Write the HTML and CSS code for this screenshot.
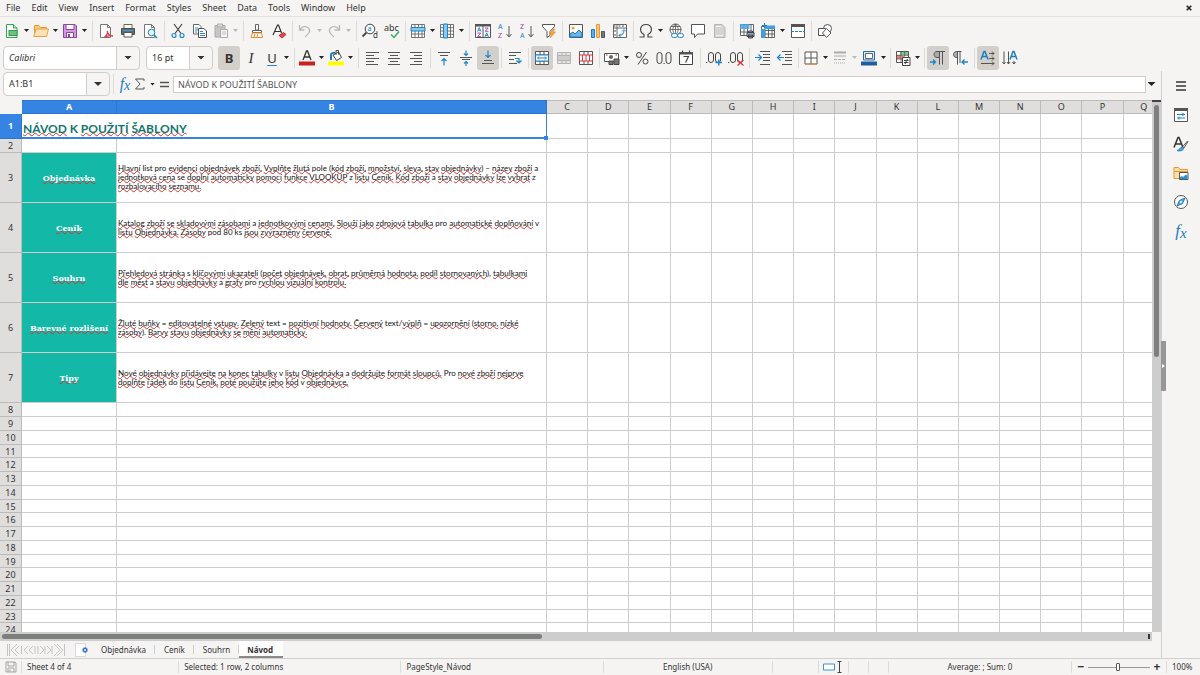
FILE: index.html
```
<!DOCTYPE html>
<html lang="en">
<head>
<meta charset="utf-8">
<title>Návod – Calc</title>
<link rel="stylesheet" href="styles.css">
</head>
<body>
<nav class="menubar">
  <button>File</button><button>Edit</button><button>View</button><button>Insert</button><button>Format</button><button>Styles</button><button>Sheet</button><button>Data</button><button>Tools</button><button>Window</button><button>Help</button>
  <button class="close" aria-label="Close document"><svg width="6" height="6" viewBox="0 0 6 6"><path d="M.7.7l4.6 4.6M5.3.7L.7 5.3" stroke="#222" stroke-width="1.6"/></svg></button>
</nav>

<div class="toolbar" role="toolbar" aria-label="Standard">
  <button class="tool split" aria-label="New"><svg viewBox="0 0 16 16"><path d="M2.500 1.500h7l3.500 3.500v9.500h-10.500z" fill="#fff" stroke="#32a852"/><path d="M9.500 1.500v3.500h3.500" fill="#bfe8c8" stroke="#32a852"/><path d="M4.500 7h9v6h-9z" fill="#2f9e48"/><path d="M5.500 9h7M5.500 11h7" stroke="#d5f3da" stroke-width=".8"/></svg></button>
  <button class="tool split" aria-label="Open"><svg viewBox="0 0 16 16"><path d="M1.500 13.500v-11h4.500l1.500 2h6v2" fill="#f9c980" stroke="#e59a38"/><path d="M.7 13.500l2.300-7.500h12.500l-2 7.500z" fill="#fde3b3" stroke="#e9a446"/></svg></button>
  <button class="tool split" aria-label="Save"><svg viewBox="0 0 16 16"><path d="M1.500 1.500h11.500l1.500 1.500v11.500h-13z" fill="#d997e0" stroke="#8d45a5"/><path d="M4 1.500h8v5h-8z" fill="#fff" stroke="#8d45a5"/><path d="M4.500 9.500h7v5h-7z" fill="#fff" stroke="#8d45a5"/><path d="M6 11h2v3h-2z" fill="#8d45a5"/></svg></button>
  <span class="sep"></span>
  <button class="tool" aria-label="Export as PDF"><svg viewBox="0 0 16 16"><path d="M2.500 1.500h7l3 3v10h-10z" fill="#fff" stroke="#777"/><path d="M9.500 1.500v3h3" fill="none" stroke="#777"/><path d="M6 14.500c2-1 4-4 3.500-6.500 0 3 2 5 5.500 5-3-.8-6 0-9 1.500" fill="none" stroke="#dc3d48" stroke-width="1.300"/></svg></button>
  <button class="tool" aria-label="Print"><svg viewBox="0 0 16 16"><path d="M4 5v-3.500h8v3.500" fill="#fff" stroke="#666"/><path d="M1.500 5.500h13v6h-13z" fill="#68696b" stroke="#4d4e50"/><path d="M4 9.500h8v4.500h-8z" fill="#fff" stroke="#555"/><path d="M3 7.500h10" stroke="#37a0dc"/></svg></button>
  <button class="tool" aria-label="Print preview"><svg viewBox="0 0 16 16"><path d="M2.500 1.500h7l3 3v10h-10z" fill="#fff" stroke="#777"/><path d="M9.500 1.500v3h3" fill="none" stroke="#777"/><circle cx="9.500" cy="9.500" r="3.300" fill="#e6f3fc" stroke="#1e84c8"/><path d="M12 12l3 3" stroke="#1e84c8" stroke-width="1.500"/></svg></button>
  <span class="sep"></span>
  <button class="tool" aria-label="Cut"><svg viewBox="0 0 16 16"><path d="M4 1l7 9.500M12 1l-7 9.500" stroke="#444" stroke-width="1.200"/><circle cx="4" cy="12.500" r="2" fill="none" stroke="#1e8bcd" stroke-width="1.200"/><circle cx="12" cy="12.500" r="2" fill="none" stroke="#1e8bcd" stroke-width="1.200"/></svg></button>
  <button class="tool" aria-label="Copy"><svg viewBox="0 0 16 16"><path d="M1.500 1.500h5.500l2 2v7.500h-7.500z" fill="#fff" stroke="#666"/><path d="M6.500 5.500h5.500l2.500 2.500v6.500h-8z" fill="#fff" stroke="#555"/><path d="M3 5h3M3 7h3M3 9h2M8 8.500h3M8 10.500h5M8 12.500h5" stroke="#2b8ccc"/></svg></button>
  <button class="tool split dim" aria-label="Paste"><svg viewBox="0 0 16 16"><path d="M2 2.500h10v11.500h-10z" fill="#c6c6c6" stroke="#aaa"/><path d="M4.500 1h5v3h-5z" fill="#ddd" stroke="#aaa"/><path d="M7.500 6.500h7v8h-7z" fill="#f6f6f6" stroke="#aaa"/><path d="M9 9h4M9 11h4" stroke="#bbb"/></svg></button>
  <span class="sep"></span>
  <button class="tool" aria-label="Clone formatting"><svg viewBox="0 0 16 16"><path d="M6.500 1.500h3v5.500h-3z" fill="#fff" stroke="#666"/><path d="M3.500 7.500h9v2h-9z" fill="#fff" stroke="#666"/><path d="M3.500 10l-1.500 4.500h11.500l-1-4.500z" fill="#fff" stroke="#ef8b2c"/><path d="M5 14l1-3M8 14l.5-3" stroke="#ef8b2c"/></svg></button>
  <button class="tool" aria-label="Clear formatting"><svg viewBox="0 0 16 16"><path d="M2 12l4.500-10h1l3 8M3.500 8.500h6" fill="none" stroke="#333" stroke-width="1.200"/><path d="M8 12.500l4.500-3 2.500 2-4 3.500z" fill="#e2484e" stroke="#c22e39"/></svg></button>
  <span class="sep tight"></span>
  <button class="tool split dim" aria-label="Undo"><svg viewBox="0 0 16 16"><path d="M2.500 2v5h5M3 6.500c2-3 6-4 8.500-1.500 3 3-.5 6-3.500 9" fill="none" stroke="#b9b9b9" stroke-width="1.300"/></svg></button>
  <button class="tool split dim" aria-label="Redo"><svg viewBox="0 0 16 16"><path d="M13.500 2v5h-5M13 6.500c-2-3-6-4-8.500-1.500-3 3 .5 6 3.500 9" fill="none" stroke="#b9b9b9" stroke-width="1.300"/></svg></button>
  <span class="sep"></span>
  <button class="tool" aria-label="Find and replace"><svg viewBox="0 0 16 16"><circle cx="8" cy="6" r="4.800" fill="#f4faff" stroke="#444"/><path d="M4.500 9.500l-4 4" stroke="#444" stroke-width="1.800"/><text x="5.500" y="8" font-size="7" fill="#1583c6">a</text><text x="11" y="15" font-size="8" fill="#333">d</text></svg></button>
  <button class="tool" aria-label="Spelling"><svg viewBox="0 0 16 16"><text x="0" y="8" font-size="9" fill="#333">abc</text><path d="M7 11.500l3 3 5-6" fill="none" stroke="#38ae60" stroke-width="1.500"/></svg></button>
  <span class="sep tight"></span>
  <button class="tool split" aria-label="Row"><svg viewBox="0 0 16 16"><path d="M1.500 1.500h13v13h-13zM1.500 11h13M5 1.500v13M8.500 1.500v13M12 1.500v13" fill="#fff" stroke="#666" stroke-width=".9"/><path d="M1 4.500h14v3.500h-14z" fill="#8cc8f0" stroke="#1e82c4"/></svg></button>
  <button class="tool split" aria-label="Column"><svg viewBox="0 0 16 16"><path d="M1.500 1.500h13v13h-13zM1.500 4.700h13M1.500 8h13M1.500 11.300h13M11.500 1.500v13" fill="#fff" stroke="#666" stroke-width=".9"/><path d="M4.500 1h4v14h-4z" fill="#8cc8f0" stroke="#1e82c4"/></svg></button>
  <span class="sep"></span>
  <button class="tool" aria-label="Sort"><svg viewBox="0 0 16 16"><path d="M.5 1.500h15v13h-15zM8 3v11.500" fill="#fff" stroke="#555"/><path d="M0 1h16v2.500h-16z" fill="#555"/><path d="M2.500 8.500l1.700-4 1.700 4M3 7.200h2.500M10 13.800l1.700-4 1.700 4M10.500 12.500h2.500" fill="none" stroke="#1683ca" stroke-width=".9"/><path d="M2.500 10h3.200l-3 3.600h3.300M10 5h3.200l-3 3.300h3.300" fill="none" stroke="#a03db0" stroke-width=".9"/></svg></button>
  <button class="tool" aria-label="Sort ascending"><svg viewBox="0 0 16 16"><text x="1" y="6" font-size="7" fill="#1683ca">A</text><text x="1" y="15" font-size="7" fill="#a03db0">Z</text><path d="M12 3v11M9.500 11l2.500 3 2.500-3" fill="none" stroke="#555"/></svg></button>
  <button class="tool" aria-label="Sort descending"><svg viewBox="0 0 16 16"><text x="1" y="6" font-size="7" fill="#a03db0">Z</text><text x="1" y="15" font-size="7" fill="#1683ca">A</text><path d="M12 3v11M9.500 11l2.500 3 2.500-3" fill="none" stroke="#555"/></svg></button>
  <button class="tool" aria-label="AutoFilter"><svg viewBox="0 0 16 16"><path d="M1.500 1.500h12v2l-4.500 5v4l-3 2v-6l-4.500-5z" fill="#fff" stroke="#555"/><path d="M12.500 6l-4 4.500h2.500l-2 4.500 5.500-6h-2.500l2-3z" fill="#f7a33b" stroke="#ec8b27" stroke-width=".6"/></svg></button>
  <span class="sep tight"></span>
  <button class="tool" aria-label="Insert image"><svg viewBox="0 0 16 16"><path d="M1.500 1.500h13v13h-13z" fill="#fff" stroke="#555"/><circle cx="5" cy="5" r="1.500" fill="#f0a13e"/><path d="M2 14v-3l3-2 2 2 4-4 3 3v4z" fill="#6ab6e8" stroke="#1c7fc2"/></svg></button>
  <button class="tool" aria-label="Insert chart"><svg viewBox="0 0 16 16"><path d="M1.500 6.500h3v8h-3z" fill="#5eb1e6" stroke="#1c7fc2"/><path d="M6.500 1.500h3v13h-3z" fill="#f9c77c" stroke="#e79a36"/><path d="M11.500 8.500h3v6h-3z" fill="#777" stroke="#555"/></svg></button>
  <button class="tool" aria-label="Pivot table"><svg viewBox="0 0 16 16"><path d="M1.500 1.500h13v13h-13zM5 1.500v13M1.500 5h13" fill="#fff" stroke="#666"/><path d="M7 12.500c3 0 5-2 5-5M10 8.500l2-2 2 2M9 10.500l-2 2 2 2" fill="none" stroke="#1c86cc"/><path d="M2 3h1.500M6.500 3h2M10 3h2M3 7v2M3 11v2" stroke="#555"/></svg></button>
  <span class="sep tight"></span>
  <button class="tool split" aria-label="Special character"><svg viewBox="0 0 16 16"><path d="M1.500 14h4.500v-2.500c-5.500-3-4-10 2-10s7.500 7 2 10v2.500h4.500" fill="none" stroke="#444" stroke-width="1.200"/></svg></button>
  <button class="tool" aria-label="Insert hyperlink"><svg viewBox="0 0 16 16"><circle cx="7.500" cy="6.500" r="5.500" fill="#fff" stroke="#555"/><path d="M2 6.500h11M3 3.500h9M7.500 1v11M7.500 1c-3.500 3-3.500 8 0 11M7.500 1c3.500 3 3.500 8 0 11" fill="none" stroke="#555" stroke-width=".8"/><rect x="3.500" y="10.500" width="6" height="4" rx="2" fill="#f4f9fd" stroke="#1c86cc"/><rect x="9.500" y="10.500" width="6" height="4" rx="2" fill="#f4f9fd" stroke="#1c86cc"/></svg></button>
  <button class="tool" aria-label="Insert comment"><svg viewBox="0 0 16 16"><path d="M1.500 1.500h13v9.500h-7l-3 3.500v-3.500h-3z" fill="#fff" stroke="#555"/></svg></button>
  <button class="tool dim" aria-label="Headers and footers"><svg viewBox="0 0 16 16"><path d="M2.500 1.500h7.500l3 3v10h-10.500z" fill="#d4d4d4" stroke="#b5b5b5"/><path d="M4 3.500h5M4 12.500h7" stroke="#f6f6f6"/></svg></button>
  <span class="sep tight"></span>
  <button class="tool" aria-label="Define print area"><svg viewBox="0 0 16 16"><path d="M1.500 1.500h13v11h-13zM1.500 9h13M5 1.500v11M8.500 1.500v11M12 1.500v11" fill="#fff" stroke="#555" stroke-width=".9"/><path d="M1 1h9.500v5h-9.500z" fill="#4ba7e3" opacity=".85"/><path d="M8 9.500h7v4h-7zM9.500 8h4v1.500h-4zM9.500 12h4v3h-4z" fill="#8fa7c2" stroke="#444"/></svg></button>
  <button class="tool split" aria-label="Freeze rows and columns"><svg viewBox="0 0 16 16"><path d="M1.500 3.500h13v11h-13zM5 3.500v11M8.500 3.500v11M12 3.500v11M1.500 7.500h13M1.500 11h13" fill="#fff" stroke="#555" stroke-width=".9"/><path d="M1 6h4v9h-4zM5 2.500h10v3.500h-10z" fill="#3d9fdf"/><path d="M4.500 0v5M2 2.500h5" stroke="#1c7fc2"/></svg></button>
  <button class="tool" aria-label="Split window"><svg viewBox="0 0 16 16"><path d="M1.500 1.500h13v13h-13z" fill="#fff" stroke="#555"/><path d="M1 1h14v3h-14z" fill="#555"/><path d="M1 8.500h14" stroke="#1c86cc" stroke-dasharray="3 1"/></svg></button>
  <span class="sep tight"></span>
  <button class="tool" aria-label="Draw functions"><svg viewBox="0 0 16 16"><circle cx="10.500" cy="5.500" r="4" fill="#fff" stroke="#555"/><path d="M1.500 5.500h7v7h-7z" fill="#fff" stroke="#555"/><path d="M9.500 5.500l4.500 4.500-4.500 4.500-4-4.500z" fill="#fff" stroke="#555"/></svg></button>
</div>

<div class="toolbar format" role="toolbar" aria-label="Formatting">
  <span class="combo font"><select aria-label="Font name"><option>Calibri</option></select></span>
  <span class="combo size"><select aria-label="Font size"><option>16 pt</option></select></span>
  <button class="tool on" aria-label="Bold"><span class="glyph bold">B</span></button>
  <button class="tool" aria-label="Italic"><span class="glyph italic">I</span></button>
  <button class="tool split" aria-label="Underline"><span class="glyph under">U</span></button>
  <span class="sep"></span>
  <button class="tool split" aria-label="Font color"><svg viewBox="0 0 16 16"><path d="M4 10l3.500-9h1l3.500 9M5.200 7h5.500" fill="none" stroke="#333" stroke-width="1.300"/><path d="M0 11.500h16v4h-16z" fill="#c9211e"/></svg></button>
  <button class="tool split" aria-label="Highlighting color"><svg viewBox="0 0 16 16"><path d="M5 5l5.500-3 3 5.500-5 3z" fill="#fff" stroke="#444"/><path d="M8 5v-4.500h2.500v4" fill="none" stroke="#444"/><path d="M3 10v-5c0-2 2-2.500 4-2" fill="none" stroke="#1c7fc2" stroke-width="2"/><path d="M0 11.500h16v4h-16z" fill="#ff0"/></svg></button>
  <span class="sep"></span>
  <button class="tool" aria-label="Align left"><svg viewBox="0 0 16 16"><path d="M2 2.500h13M2 5.500h8M2 8.500h13M2 11.500h8M2 14.500h12" stroke="#555"/></svg></button>
  <button class="tool" aria-label="Center horizontally"><svg viewBox="0 0 16 16"><path d="M2 2.500h12M4 5.500h8M2 8.500h12M4 11.500h8M2 14.500h12" stroke="#555"/></svg></button>
  <button class="tool" aria-label="Align right"><svg viewBox="0 0 16 16"><path d="M2 2.500h12M6 5.500h8M2 8.500h12M6 11.500h8M2 14.500h12" stroke="#555"/></svg></button>
  <span class="sep"></span>
  <button class="tool" aria-label="Align top"><svg viewBox="0 0 16 16"><path d="M2 2.500h12M4 5.500h8" stroke="#555"/><path d="M8 15.500v-7M5.500 11l2.500-2.500 2.500 2.500" fill="none" stroke="#1c86cc" stroke-width="1.200"/></svg></button>
  <button class="tool" aria-label="Center vertically"><svg viewBox="0 0 16 16"><path d="M2 7.500h12M4 9.500h8" stroke="#555"/><path d="M8 .5v5M6 3.500l2 2 2-2M8 16v-4.500M6 13.500l2-2 2 2" fill="none" stroke="#1c86cc" stroke-width="1.200"/></svg></button>
  <button class="tool on" aria-label="Align bottom"><svg viewBox="0 0 16 16"><path d="M4 10.500h8M2 13.500h12" stroke="#555"/><path d="M8 .5v7M5.500 5l2.500 2.500 2.500-2.500" fill="none" stroke="#1c86cc" stroke-width="1.200"/></svg></button>
  <span class="sep tight"></span>
  <button class="tool" aria-label="Wrap text"><svg viewBox="0 0 16 16"><path d="M2 2.500h12M2 5.500h7M2 9.500h5M2 13.500h8" stroke="#555"/><path d="M8 8.500h4v4M9.500 10.500l2.500 2.500 2.500-2.500" fill="none" stroke="#1c86cc" stroke-width="1.200"/></svg></button>
  <span class="sep tight"></span>
  <button class="tool on" aria-label="Merge and center cells"><svg viewBox="0 0 16 16"><path d="M1.500 1.500h13v13h-13zM6 1.500v13M10 1.500v13M1.500 5h13M1.500 11h13" fill="#fff" stroke="#555"/><path d="M1.500 5h13v6h-13z" fill="#fff" stroke="#1c7fc2"/><path d="M4 8h8M5 6.500L3.500 8 5 9.500M11 6.500L12.500 8 11 9.500" fill="none" stroke="#1c86cc"/></svg></button>
  <button class="tool dim" aria-label="Merge cells"><svg viewBox="0 0 16 16"><path d="M1.500 2.500h13v11h-13zM6 2.500v11M10 2.500v11M1.500 5.500h13M1.500 10.500h13" fill="#e4e4e4" stroke="#b3b3b3"/><path d="M2 6h12v4h-12z" fill="#ccc"/></svg></button>
  <button class="tool" aria-label="Unmerge cells"><svg viewBox="0 0 16 16"><path d="M1.500 1.500h13v13h-13zM6 1.500v13M10 1.500v13" fill="#fff" stroke="#555"/><path d="M1.500 5h13v6h-13zM4.500 5v6M8 5v6M11.500 5v6" fill="#fff" stroke="#d6343c"/></svg></button>
  <span class="sep tight"></span>
  <button class="tool split" aria-label="Format as currency"><svg viewBox="0 0 16 16"><path d="M.5 3.500h14v8h-14z" fill="#fff" stroke="#555"/><circle cx="7" cy="7" r="2" fill="#666"/><path d="M2 5h1.500M11.500 5h1.500" stroke="#555"/><path d="M5 11h4v3.500h-4zM10 9h5v5.500h-5z" fill="#777" stroke="#444"/></svg></button>
  <button class="tool" aria-label="Format as percent"><svg viewBox="0 0 16 16"><circle cx="5" cy="5" r="2.500" fill="none" stroke="#444"/><circle cx="11.500" cy="11.500" r="2.500" fill="none" stroke="#444"/><path d="M12.500 2l-8.500 12.500" stroke="#444"/></svg></button>
  <button class="tool" aria-label="Format as number"><svg viewBox="0 0 16 16"><rect x="1" y="2.500" width="5" height="11" rx="2.500" fill="none" stroke="#444"/><rect x="10" y="2.500" width="5" height="11" rx="2.500" fill="none" stroke="#444"/><path d="M7.500 13.500h1.200" stroke="#444" stroke-width="1.200"/></svg></button>
  <button class="tool" aria-label="Format as date"><svg viewBox="0 0 16 16"><path d="M1.500 2.500h13v12h-13z" fill="#fff" stroke="#444"/><path d="M1 2h14v2.500h-14z" fill="#555"/><path d="M4.500.5v2M11.500.5v2M5.500 6.500h5l-3 6" fill="none" stroke="#444" stroke-width="1.200"/></svg></button>
  <span class="sep"></span>
  <button class="tool" aria-label="Add decimal place"><svg viewBox="0 0 16 16"><path d="M0 12.500h1.200" stroke="#444" stroke-width="1.200"/><rect x="2.500" y="2.500" width="5" height="10" rx="2.500" fill="none" stroke="#444"/><rect x="9.500" y="2.500" width="5" height="10" rx="2.500" fill="none" stroke="#444"/><path d="M9.500 12.500h6.500M12.800 9.500v6" stroke="#1c86cc" stroke-width="1.400"/></svg></button>
  <button class="tool" aria-label="Delete decimal place"><svg viewBox="0 0 16 16"><path d="M0 12.500h1.200" stroke="#444" stroke-width="1.200"/><rect x="2.500" y="2.500" width="5" height="10" rx="2.500" fill="none" stroke="#444"/><rect x="9.500" y="2.500" width="5" height="10" rx="2.500" fill="none" stroke="#444"/><path d="M9.500 10l6 5.500M15.500 10l-6 5.500" stroke="#dc3640" stroke-width="1.300"/></svg></button>
  <span class="sep tight"></span>
  <button class="tool" aria-label="Increase indent"><svg viewBox="0 0 16 16"><path d="M5 1.500h10M8 4.500h7M8 7.500h7M8 10.500h7M5 14.500h10" stroke="#555"/><path d="M0 7.500h6M3.500 4.500l3 3-3 3" fill="none" stroke="#1c86cc" stroke-width="1.200"/></svg></button>
  <button class="tool" aria-label="Decrease indent"><svg viewBox="0 0 16 16"><path d="M5 1.500h10M8 4.500h7M8 7.500h7M8 10.500h7M5 14.500h10" stroke="#555"/><path d="M1 7.500h6M3.500 4.500l-3 3 3 3" fill="none" stroke="#1c86cc" stroke-width="1.200"/></svg></button>
  <span class="sep tight"></span>
  <button class="tool split" aria-label="Borders"><svg viewBox="0 0 16 16"><path d="M2 2h12v12h-12zM8 2v12M2 8h12" fill="#fff" stroke="#555"/><path d="M2 14h12" stroke="#e79440"/></svg></button>
  <button class="tool split dim" aria-label="Border style"><svg viewBox="0 0 16 16"><path d="M2 2.500h12" stroke="#aaa" stroke-width="2"/><path d="M2 6h12" stroke="#aaa"/><path d="M2 9.500h12" stroke="#aaa" stroke-dasharray="3 1"/><path d="M2 13h12" stroke="#aaa" stroke-dasharray="1 1"/></svg></button>
  <button class="tool split" aria-label="Border color"><svg viewBox="0 0 16 16"><path d="M2.500 1.500h11v8.500h-11z" fill="#d5ecfb" stroke="#1f6db3"/><path d="M4.500 3.500h7v5h-7z" fill="#fff" stroke="#666"/><path d="M0 11.500h16v4h-16z" fill="#1f5f9f"/></svg></button>
  <span class="sep tight"></span>
  <button class="tool split" aria-label="Conditional formatting"><svg viewBox="0 0 16 16"><path d="M1.500 1.500h12v11h-12z" fill="#fff" stroke="#555"/><path d="M2 5h4v4h-4zM6.500 6h3v3h-3z" fill="#ef7c76"/><path d="M5 2h8v3h-8z" fill="#7dcc87"/><path d="M1.500 5.300h12M1.500 9h12M6 1.500v11M9.700 1.500v5" stroke="#555" stroke-width=".8"/><path d="M7.500 7.500h7.500v8h-7.500z" fill="#fff" stroke="#444"/><path d="M9 10.500h4.500M9 12.500h4.500M12.500 9l-2.500 5" stroke="#444"/></svg></button>
  <span class="sep tight"></span>
  <button class="tool on" aria-label="Left-to-right"><svg viewBox="0 0 16 16"><path d="M9.500 1.500h-2.500c-4 0-4 6 0 6h2.500z" fill="#aaa"/><path d="M9.500 14.500v-13M12.500 14.500v-13M15 1.500h-8c-4 0-4 6 0 6h2.500" fill="none" stroke="#555"/><path d="M0 12h5.500M3 9.500l2.500 2.500-2.500 2.500" fill="none" stroke="#1c86cc" stroke-width="1.300"/></svg></button>
  <button class="tool" aria-label="Right-to-left"><svg viewBox="0 0 16 16"><path d="M5.500 1.500h-1c-4 0-4 6 0 6h1z" fill="#aaa"/><path d="M5.500 14.500v-13M8 13v-11.500M9.500 1.500h-5c-4 0-4 6 0 6h1" fill="none" stroke="#555"/><path d="M10 12h6M12.500 9.500l-2.500 2.500 2.500 2.500" fill="none" stroke="#1c86cc" stroke-width="1.300"/></svg></button>
  <span class="sep"></span>
  <button class="tool on" aria-label="Text direction from left to right"><svg viewBox="0 0 16 16"><path d="M1 9.500l3-8h1l3 8M2.200 6.500h4.500" fill="none" stroke="#1c7fc2" stroke-width="1.500"/><path d="M9 3.500h5M12 1.500l2 2-2 2M9 8.500h5M12 6.500l2 2-2 2M1 13.500h13M12 11.500l2 2-2 2" fill="none" stroke="#555"/></svg></button>
  <button class="tool" aria-label="Text direction from top to bottom"><svg viewBox="0 0 16 16"><path d="M8 9.500l3-8h1l3 8M9.200 6.500h4.500" fill="none" stroke="#1c7fc2" stroke-width="1.500"/><path d="M2 1.500v12.500M.5 12l1.500 2 1.500-2M6.500 1.500v12.500M5 12l1.500 2 1.500-2M12 11v3M10.500 12l1.500 2 1.500-2" fill="none" stroke="#555"/></svg></button>
</div>

<div class="work">
  <main class="document">
    <div class="formula-bar">
      <span class="combo name"><select aria-label="Name box"><option>A1:B1</option></select></span>
      <span class="sep"></span>
      <button class="fx" aria-label="Function wizard">f<span>x</span></button>
      <button class="sum" aria-label="Select function"><svg width="12" height="12" viewBox="0 0 12 12"><path d="M10 3v-2h-8.500l4.500 5-4.500 5h8.500v-2" fill="none" stroke="#555"/></svg><i class="caret"></i></button>
      <button class="equals" aria-label="Formula"><svg width="9" height="7" viewBox="0 0 9 7"><path d="M0 1.500h9M0 5.500h9" stroke="#555" stroke-width="1.500"/></svg></button>
      <input class="formula" aria-label="Input line" value="NÁVOD K POUŽITÍ ŠABLONY">
      <button class="expand" aria-label="Expand formula bar"><i class="caret wide"></i></button>
    </div>
    <div class="sheet-area">
      <div class="sheet-view">
        <table class="sheet">
          <colgroup><col class="c-head"><col class="c-a"><col class="c-b"><col span="15"></colgroup>
          <thead><tr><th class="corner"></th><th class="sel">A</th><th class="sel">B</th><th>C</th><th>D</th><th>E</th><th>F</th><th>G</th><th>H</th><th>I</th><th>J</th><th>K</th><th>L</th><th>M</th><th>N</th><th>O</th><th>P</th><th>Q</th></tr></thead>
          <tbody id="rows">
            <tr class="r-title"><th class="sel">1</th><td class="title" colspan="2"><b>NÁVOD</b> K <b>POUŽITÍ</b> <b>ŠABLONY</b></td></tr>
            <tr><th>2</th><td></td><td></td></tr>
            <tr class="r-tall"><th>3</th><td class="key"><b>Objednávka</b></td><td class="note"><b>Hlavní</b> list pro <b>evidenci</b> <b>objednávek</b> <b>zboží.</b> <b>Vyplňte</b> <b>žlutá</b> pole (<b>kód</b> <b>zboží,</b> <b>množství,</b> <b>sleva,</b> <b>stav</b> <b>objednávky</b>) – <b>název</b> <b>zboží</b> a<br><b>jednotková</b> <b>cena</b> se <b>doplní</b> <b>automaticky</b> <b>pomocí</b> <b>funkce</b> <b>VLOOKUP</b> z <b>listu</b> <b>Ceník.</b> <b>Kód</b> <b>zboží</b> a <b>stav</b> <b>objednávky</b> <b>lze</b> <b>vybrat</b> z<br><b>rozbalovacího</b> <b>seznamu.</b></td></tr>
            <tr class="r-tall"><th>4</th><td class="key"><b>Ceník</b></td><td class="note"><b>Katalog</b> <b>zboží</b> <b>se</b> <b>skladovými</b> <b>zásobami</b> a <b>jednotkovými</b> <b>cenami.</b> <b>Slouží</b> <b>jako</b> <b>zdrojová</b> <b>tabulka</b> pro <b>automatické</b> <b>doplňování</b> v<br><b>listu</b> <b>Objednávka.</b> <b>Zásoby</b> pod 80 ks <b>jsou</b> <b>zvýrazněny</b> <b>červeně.</b></td></tr>
            <tr class="r-tall"><th>5</th><td class="key"><b>Souhrn</b></td><td class="note"><b>Přehledová</b> <b>stránka</b> s <b>klíčovými</b> <b>ukazateli</b> (<b>počet</b> <b>objednávek,</b> <b>obrat,</b> <b>průměrná</b> <b>hodnota,</b> <b>podíl</b> <b>stornovaných</b>), <b>tabulkami</b><br><b>dle</b> <b>měst</b> a <b>stavu</b> <b>objednávky</b> a <b>grafy</b> pro <b>rychlou</b> <b>vizuální</b> <b>kontrolu.</b></td></tr>
            <tr class="r-tall"><th>6</th><td class="key"><b>Barevné</b> <b>rozlišení</b></td><td class="note"><b>Žluté</b> <b>buňky</b> = <b>editovatelné</b> <b>vstupy.</b> <b>Zelený</b> text = <b>pozitivní</b> <b>hodnoty.</b> <b>Červený</b> text/<b>výplň</b> = <b>upozornění</b> (<b>storno,</b> <b>nízké</b><br><b>zásoby</b>). <b>Barvy</b> <b>stavu</b> <b>objednávky</b> <b>se</b> <b>mění</b> <b>automaticky.</b></td></tr>
            <tr class="r-tall"><th>7</th><td class="key"><b>Tipy</b></td><td class="note"><b>Nové</b> <b>objednávky</b> <b>přidávejte</b> <b>na</b> <b>konec</b> <b>tabulky</b> v <b>listu</b> <b>Objednávka</b> a <b>dodržujte</b> <b>formát</b> <b>sloupců.</b> Pro <b>nové</b> <b>zboží</b> <b>nejprve</b><br><b>doplňte</b> <b>řádek</b> do <b>listu</b> <b>Ceník,</b> <b>poté</b> <b>použijte</b> <b>jeho</b> <b>kód</b> v <b>objednávce.</b></td></tr>
          </tbody>
        </table>
      </div>
      <div class="vscroll"><span></span></div>
    </div>
    <div class="hscroll"><span></span><i></i></div>
    <div class="tabs">
      <button class="nav" aria-label="Scroll sheets"><svg width="60" height="14" viewBox="0 0 60 14"><g fill="none" stroke="#c4c4c4"><path d="M1.500 1v12M3.500 1v12M11 1l-6 6 6 6M13 3l-4 4 4 4M15.500 3v8M22 3l-4 4 4 4M27 3l-4 4 4 4M29 3v8M32 3v8M34 3l4 4-4 4M39 3v8M41 3l4 4-4 4M46 3v8M48 1l6 6-6 6M51 1l6 6-6 6M58.500 1v12"/></g></svg></button>
      <button class="add" aria-label="Insert sheet"><svg width="13" height="14" viewBox="0 0 13 14"><path d="M.5.500h10v13h-10z" fill="#fff" stroke="#ccc" stroke-width=".7"/><path d="M10 4.500v5M7.500 7h5" stroke="#2d6cc4" stroke-width="3"/><circle cx="10" cy="7" r="1" fill="#fff"/></svg></button>
      <div class="tablist" role="tablist"><button role="tab">Objednávka</button><button role="tab">Ceník</button><button role="tab">Souhrn</button><button role="tab" class="active" aria-selected="true">Návod</button></div>
    </div>
  </main>
  <aside class="sidebar">
    <button class="tool" aria-label="Sidebar settings"><svg viewBox="0 0 16 16"><path d="M3 4h10M3 8h10M3 12h10" stroke="#333" stroke-width="1.500"/></svg></button>
    <button class="tool" aria-label="Properties"><svg viewBox="0 0 16 16"><path d="M1.500 1.500h13v13h-13z" fill="#fff" stroke="#555"/><path d="M1 1h14v3h-14z" fill="#555"/><path d="M4 7.500h8M10 6v3M4 11h8M6 9.500v3" stroke="#1c86cc"/></svg></button>
    <button class="tool" aria-label="Styles"><svg viewBox="0 0 16 16"><path d="M1 11.500l4-10h1l4 10M2.500 8h6" fill="none" stroke="#333" stroke-width="1.500"/><path d="M14.500 5l-5 6 1.500 1 4-6.500z" fill="#fff" stroke="#555"/><path d="M4 14.500c2 0 3-3 5-3.500l1.500 1.500c0 2-4 3-6.500 2" fill="#4aa6e0" stroke="#1c7fc2"/></svg></button>
    <button class="tool" aria-label="Gallery"><svg viewBox="0 0 16 16"><path d="M1 13.500v-11h4.500l1.500 2h7.500v9z" fill="#fde0ad" stroke="#e99636"/><path d="M1 6.500h13.500" stroke="#e99636"/><path d="M6.500 7.500h8.500v7h-8.500z" fill="#fff" stroke="#555"/><path d="M7 14v-2l2-1 1 1 3-2.500 1.500 1.500v3z" fill="#318fd2"/></svg></button>
    <button class="tool" aria-label="Navigator"><svg viewBox="0 0 16 16"><circle cx="8" cy="8" r="6.500" fill="#fff" stroke="#555"/><path d="M12 4l-2.500 5.500-5.500 2.500 2.500-5.500z" fill="#5aaee6" stroke="#1c7fc2"/><circle cx="8" cy="8" r="1" fill="#fff"/></svg></button>
    <button class="fx" aria-label="Functions">f<span>x</span></button>
    <button class="grip" aria-label="Hide sidebar"></button>
  </aside>
</div>

<footer class="status">
  <span class="mid"><svg width="12" height="12" viewBox="0 0 12 12"><path d="M1 1h9l1 1v9h-10zM3 1v4h6v-4M3 11v-4h6v4M5 8.500v2.500" fill="none" stroke="#a5a5a5"/></svg></span>
  <span>Sheet 4 of 4</span>
  <span>Selected: 1 row, 2 columns</span>
  <span>PageStyle_Návod</span>
  <span class="mid">English (USA)</span>
  <span></span>
  <span class="mid"><svg width="22" height="12" viewBox="0 0 22 12"><path d="M1.500 3h11v6h-11z" fill="#fff" stroke="#3a94d0"/><path d="M17.500 1v10M15.500.5h4M15.500 11.500h4" stroke="#444"/></svg></span>
  <span></span>
  <span></span>
  <span class="mid">Average: ; Sum: 0</span>
  <span class="zoom"><button aria-label="Zoom out">−</button><input type="range" min="0" max="100" value="48" aria-label="Zoom"><button aria-label="Zoom in">+</button></span>
  <span>100%</span>
</footer>
<script src="sheet.js"></script>
</body>
</html>
```
FILE: styles.css
```
* { box-sizing: border-box; }
body {
  margin: 0;
  height: 100vh;
  display: flex;
  flex-direction: column;
  overflow: hidden;
  background: #f5f4f2;
  color: #333;
  font: 9px/12px "Noto Sans", sans-serif;
}
button, input, select { font: inherit; color: inherit; margin: 0; padding: 0; border: 0; background: none; }
button { display: flex; align-items: center; justify-content: center; flex: none; }
svg { flex: none; display: block; overflow: visible; }
svg text { font-family: "Noto Sans", sans-serif; }

.menubar { display: flex; align-items: center; gap: 11px; height: 17px; padding: 0 6px; border-bottom: 1px solid #e4e3e1; flex: none; }
.menubar .close { margin-left: auto; width: 10px; }

.toolbar { display: flex; align-items: center; height: 27px; padding-left: 2px; flex: none; }
.tool { width: 22px; height: 24px; border-radius: 3px; }
.tool svg { width: 16px; height: 16px; }
.tool.on { background: #d3cfcb; }
.split { width: 29px; justify-content: flex-start; padding-left: 2px; gap: 4px; }
.split::after, .caret { content: ""; width: 5px; height: 3px; background: #222; clip-path: polygon(0 0, 100% 0, 50% 100%); flex: none; }
.dim::after { background: #bbb; }
.caret.wide { width: 8px; height: 4px; }
.sep { width: 1px; height: 20px; margin: 0 2px 0 3px; background: #dddbd8; flex: none; }
.sep.tight { margin: 0 2px; }
.glyph { font-size: 13px; line-height: 20px; }
.bold { font-weight: 700; }
.italic { font-family: "Liberation Serif", serif; font-style: italic; font-size: 15px; }
.under { width: 16px; text-align: center; text-decoration: underline #1c86cc; text-underline-offset: 2px; }

.format .combo { margin: 0 6px 0 1px; }
.combo { position: relative; display: flex; height: 24px; flex: none; }
.combo select {
  appearance: none;
  width: 100%;
  padding: 0 5px;
  border: 1px solid #d0cdca;
  border-radius: 4px;
  background: linear-gradient(to left, #f6f5f4 22px, #d0cdca 22px, #d0cdca 23px, #fff 23px);
}
.combo::after { content: ""; position: absolute; right: 8px; top: 10px; width: 8px; height: 4px; background: #333; clip-path: polygon(0 0, 100% 0, 50% 100%); }
.combo.font { width: 137px; font-style: italic; }
.format .combo.size { width: 67px; margin: 0 5px 0 0; }
.combo.name { width: 107px; }

.work { flex: 1; min-height: 0; display: flex; }
.document { flex: 1; min-width: 0; display: flex; flex-direction: column; }
.formula-bar { display: flex; align-items: center; height: 29px; padding: 0 4px 3px 3px; flex: none; }
.fx { font: italic 16px/20px "Liberation Serif", serif; color: #1c7fc2; width: 18px; }
.fx span { font-size: 14px; margin-top: 4px; }
.sum { gap: 4px; }
.equals { width: 18px; }
.formula { flex: 1; min-width: 0; height: 17px; padding: 0 4px; border: 1px solid #d0cdca; background: #fff; color: #555; }
.expand { width: 11px; }

.sheet-area { flex: 1; min-height: 0; display: flex; }
.sheet-view { flex: 1; min-width: 0; overflow: hidden; background: #fff; }
.sheet { width: calc(100% + 13px); table-layout: fixed; border-collapse: separate; border-spacing: 0; }
.c-head { width: 22px; }
.c-a { width: 95px; }
.c-b { width: 430px; }
.sheet tr { height: 14px; }
.sheet td, .sheet th { padding: 0; border: solid #cdcdcd; border-width: 0 1px 1px 0; line-height: 12px; }
.sheet th { background: #dfdedd; border-color: #bcbbb9; font-weight: 400; }
.sheet thead th { border-top: 1px solid #bcbbb9; }
.sheet .corner { background: #f5f4f2; border-color: #f5f4f2; }
.sheet th.sel { background: #3584e4; border-color: #2d76cf; color: #fff; font-weight: 700; }
.sheet tr.r-title { height: 25px; }
.sheet tr.r-tall { height: 50px; }
.sheet tr.r-short, .sheet tr.r-short td, .sheet tr.r-short th { height: 13px; line-height: 11px; }
.sheet b { font-weight: inherit; text-decoration: underline wavy #d8322f 1px; text-underline-offset: -1px; text-decoration-skip-ink: none; }
.sheet td.title { position: relative; border-right: 1px solid #3584e4; border-bottom: 2px solid #3584e4; padding: 7px 0 0 1px; color: #0f766e; font: 700 12px/16px Lato, sans-serif; }
.title::after { content: ""; position: absolute; right: -2px; bottom: -3px; width: 4px; height: 4px; background: #3584e4; }
.sheet td.key { background: #14b8a6; color: #fff; text-align: center; font: 700 8px/12px "DejaVu Serif", serif; }
.sheet td.note { padding-left: 1px; color: #111; white-space: nowrap; font: 8px/9px Lato, sans-serif; }

.vscroll { width: 9px; background: #cdcdcd; border-top: 2px solid #444; padding: 3px 2px; flex: none; }
.vscroll span { display: block; height: 48%; border-radius: 3px; background: #7f7f7f; }
.hscroll { display: flex; justify-content: space-between; height: 9px; margin-right: 9px; padding: 2px; background: #cdcdcd; flex: none; }
.hscroll span { width: 47%; border-radius: 3px; background: #7c7f7b; }
.hscroll i { width: 2px; background: #333; }
.tabs { display: flex; align-items: center; height: 17px; padding-left: 6px; font-size: 8px; flex: none; }
.tabs .add { margin-left: 9px; }
.tablist { display: flex; margin-left: 4px; height: 17px; }
.tablist button { padding: 0 9px; background: linear-gradient(#ccc, #ccc) right center / 1px 9px no-repeat; }
.tablist button.active { padding: 2px 10px 0 8px; background: #fff; border-bottom: 2px solid #8a8a8a; font-weight: 700; }

.sidebar { position: relative; width: 39px; display: flex; flex-direction: column; align-items: center; gap: 5px; padding-top: 3px; border-left: 1px solid #d2d0ce; flex: none; }
.sidebar .fx { height: 24px; font-size: 17px; }
.sidebar .fx span { font-size: 15px; }
.grip { position: absolute; left: -1px; top: 46%; width: 5px; height: 50px; background: #979797; }
.grip::after { content: ""; width: 3px; height: 4px; background: #fff; clip-path: polygon(0 0, 100% 50%, 0 100%); }

.status {
  display: grid;
  grid-template-columns: 22px 157fr 222fr 202fr 169fr 46fr 30px 20px 20px 183fr 95px 33px;
  height: 17px;
  flex: none;
  align-items: center;
  border-top: 1px solid #d2d0ce;
  font-size: 8px;
}
.status > span { height: 12px; padding: 0 5px; border-right: 1px solid #dddbd8; white-space: nowrap; }
.status > span:last-child { border: 0; }
.status > .mid { display: flex; justify-content: center; align-items: center; padding: 0; }
.status > .zoom { display: flex; align-items: center; gap: 3px; }
.zoom button { font: 700 12px/12px "Noto Sans", sans-serif; width: 8px; }
.zoom input { appearance: none; flex: 1; min-width: 0; height: 10px; background: linear-gradient(#999, #999) center / 100% 1px no-repeat; }
.zoom input::-webkit-slider-thumb { appearance: none; width: 4px; height: 8px; border: 1px solid #555; border-radius: 1px; background: #fff; }
```
FILE: sheet.js
```
// Completes the grid: pads the written rows out to column Q, then adds the empty rows below.
const LAST_COLUMN = 17;
const LAST_ROW = 24;
const body = document.getElementById("rows");

for (const row of body.rows) {
  let used = 0;
  for (const cell of row.querySelectorAll("td")) used += cell.colSpan;
  while (used++ < LAST_COLUMN) row.insertCell();
}

for (let number = body.rows.length + 1; number <= LAST_ROW; number++) {
  const row = body.insertRow();
  if (number % 4 === 3) row.className = "r-short";
  const head = document.createElement("th");
  head.textContent = number;
  row.append(head);
  for (let column = 0; column < LAST_COLUMN; column++) row.insertCell();
}
```
